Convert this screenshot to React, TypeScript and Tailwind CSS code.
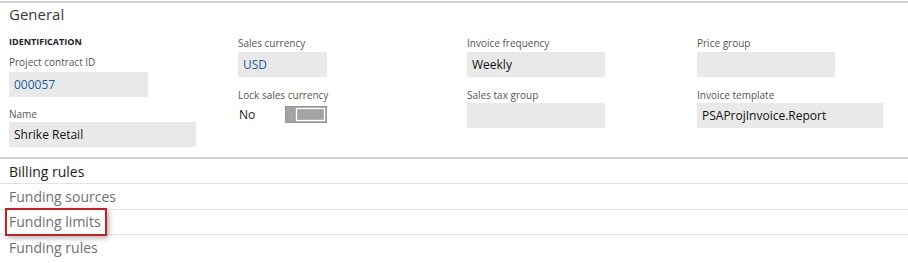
import React from "react";

const font = { fontFamily: '"Open Sans", "Noto Sans", Arial, sans-serif' };

function Label({ children }: { children: React.ReactNode }) {
  return <div className="text-[10px] leading-[14px] text-[#555]">{children}</div>;
}

function Field({ w, value, blue }: { w: string; value?: string; blue?: boolean }) {
  return (
    <div className={`${w} h-[25px] bg-[#e9e9e9] flex items-center pl-[5px] text-[12px] ${blue ? "text-[#1e5aa0]" : "text-[#111]"}`}>
      {value}
    </div>
  );
}

export default function App() {
  return (
    <div style={font} className="w-[908px] h-[263px] bg-white overflow-hidden">
      <div className="h-[2px] bg-[#cfcfcf] mt-[1px]" />
      <div className="pl-[9px] text-[15px] leading-[20px] text-[#3a3a3a] mt-[1px] font-normal">General</div>
      <div className="flex pl-[9px] mt-[12px] h-[121px]">
        <div className="w-[229px]">
          <div className="text-[9px] font-bold text-[#222] leading-[14px] mt-[-1px]">IDENTIFICATION</div>
          <div className="mt-[6px]"><Label>Project contract ID</Label></div>
          <div className="mt-[3px]"><Field w="w-[139px]" value="000057" blue /></div>
          <div className="mt-[10px]"><Label>Name</Label></div>
          <div className="mt-[1px]"><Field w="w-[187px]" value="Shrike Retail" /></div>
        </div>
        <div className="w-[229px]">
          <Label>Sales currency</Label>
          <div className="mt-[2px]"><Field w="w-[89px]" value="USD" blue /></div>
          <div className="mt-[11px]"><Label>Lock sales currency</Label></div>
          <div className="flex items-center mt-[1px] h-[24px]">
            <span className="text-[12px] text-[#222] w-[47px] pl-[1px]">No</span>
            <svg width="42" height="17" viewBox="0 0 42 17" className="mt-[-1px]">
              <rect x="0" y="0" width="42" height="17" fill="#a3a3a3" />
              <rect x="11.5" y="2.5" width="28" height="12" fill="none" stroke="#fff" strokeWidth="1.3" />
              <rect x="0" y="0" width="42" height="17" fill="none" stroke="#8c8c8c" strokeWidth="1" />
            </svg>
          </div>
        </div>
        <div className="w-[230px]">
          <Label>Invoice frequency</Label>
          <div className="mt-[2px]"><Field w="w-[138px]" value="Weekly" /></div>
          <div className="mt-[11px]"><Label>Sales tax group</Label></div>
          <div className="mt-[1px]"><Field w="w-[138px]" /></div>
        </div>
        <div className="w-[200px]">
          <Label>Price group</Label>
          <div className="mt-[2px]"><Field w="w-[138px]" /></div>
          <div className="mt-[11px]"><Label>Invoice template</Label></div>
          <div className="mt-[1px]"><Field w="w-[186px]" value="PSAProjInvoice.Report" /></div>
        </div>
      </div>
      <div className="h-[2px] bg-[#d0d0d0]" />
      <div className="h-[24px] pl-[9px] flex items-center text-[14px] text-[#222]">Billing rules</div>
      <div className="h-px bg-[#e3e3e3]" />
      <div className="h-[25px] pl-[9px] flex items-center text-[14px] text-[#707070]">Funding sources</div>
      <div className="h-px bg-[#e3e3e3]" />
      <div className="h-[24px] flex items-center text-[14px] text-[#707070]">
        <div className="ml-[5px] h-[28px] mt-[-1px] w-[102px] border-2 border-[#c0202a] shadow-[2px_2px_5px_rgba(0,0,0,0.3)] flex items-center pl-[2px] bg-white">Funding limits</div>
      </div>
      <div className="h-px bg-[#e3e3e3]" />
      <div className="h-[25px] pl-[9px] flex items-center text-[14px] text-[#707070]">Funding rules</div>
    </div>
  );
}
